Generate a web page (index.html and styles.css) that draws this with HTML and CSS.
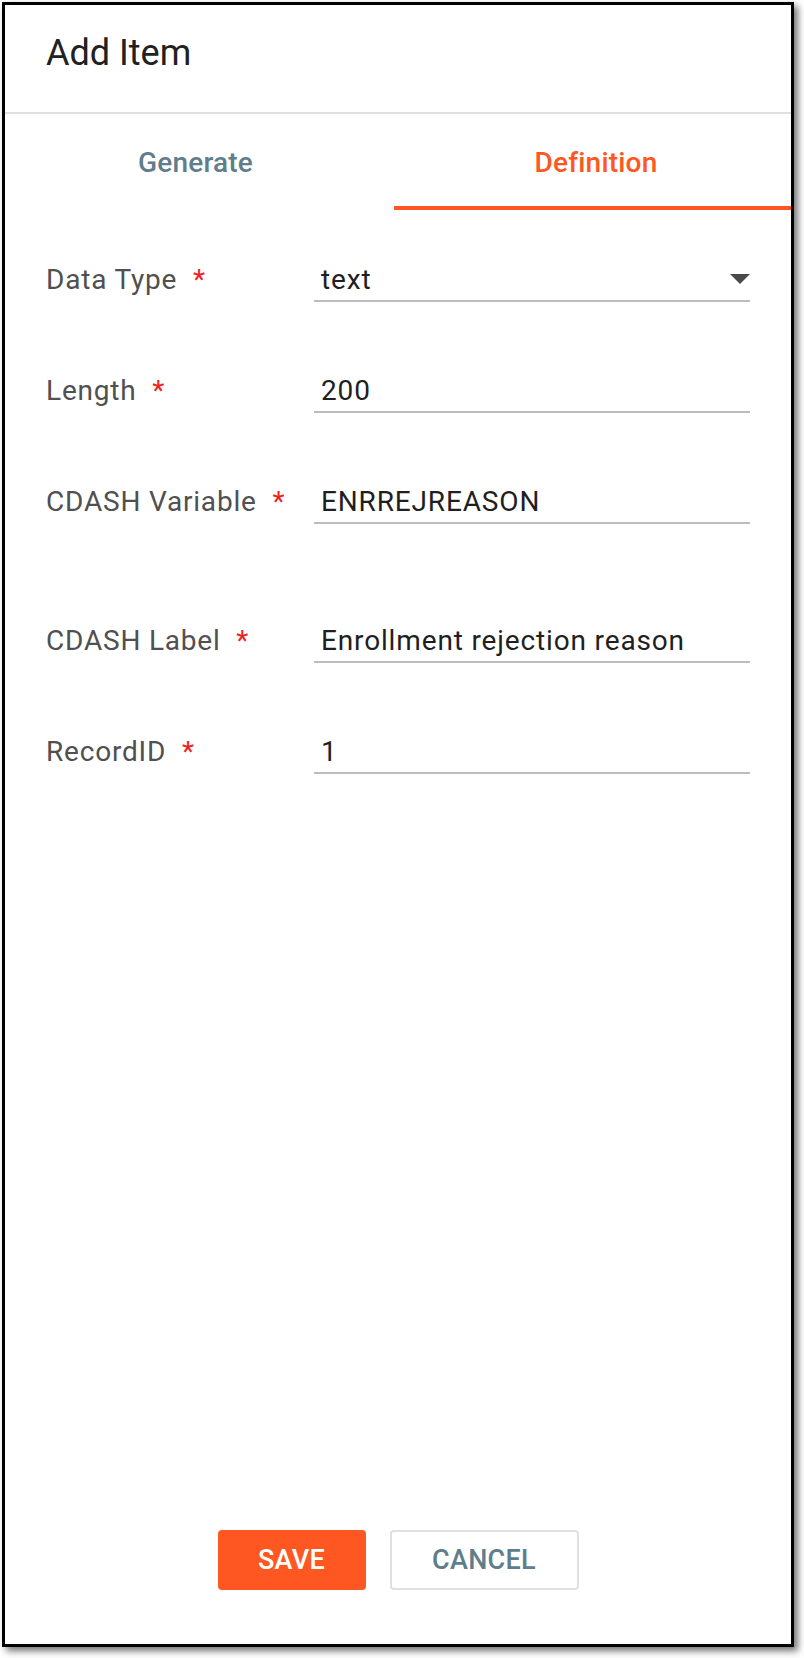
FILE: index.html
```html
<!DOCTYPE html>
<html lang="en">
<head>
<meta charset="utf-8">
<title>Add Item</title>
<link rel="stylesheet" href="styles.css">
</head>
<body>
<div class="dialog">
  <div class="dialog-header">
    <h1 class="dialog-title">Add Item</h1>
  </div>
  <div class="tabs">
    <div class="tab tab-first">Generate</div>
    <div class="tab tab-active">Definition</div>
  </div>
  <div class="form">
    <div class="field-row">
      <div class="field-label">Data Type <span class="req">*</span></div>
      <div class="field-input select">
        <span class="value">text</span>
        <svg class="arrow" width="20" height="10" viewBox="0 0 20 10"><path d="M0 0 L20 0 L10 10 Z" fill="#4a4a4a"/></svg>
      </div>
    </div>
    <div class="field-row">
      <div class="field-label">Length <span class="req">*</span></div>
      <div class="field-input"><span class="value">200</span></div>
    </div>
    <div class="field-row field-row-spaced">
      <div class="field-label">CDASH Variable <span class="req">*</span></div>
      <div class="field-input"><span class="value">ENRREJREASON</span></div>
    </div>
    <div class="field-row">
      <div class="field-label">CDASH Label <span class="req">*</span></div>
      <div class="field-input"><span class="value">Enrollment rejection reason</span></div>
    </div>
    <div class="field-row">
      <div class="field-label">RecordID <span class="req">*</span></div>
      <div class="field-input"><span class="value">1</span></div>
    </div>
  </div>
  <div class="actions">
    <button class="btn btn-primary">SAVE</button>
    <button class="btn btn-secondary">CANCEL</button>
  </div>
</div>
</body>
</html>
```
FILE: styles.css
```css
html, body {
  margin: 0;
  padding: 0;
  background: #ffffff;
}

body {
  font-family: Roboto, "Liberation Sans", sans-serif;
  width: 804px;
  height: 1658px;
  overflow: hidden;
}

.dialog {
  margin: 2px 0 0 2px;
  width: 792px;
  height: 1645px;
  box-sizing: border-box;
  border: 3px solid #000000;
  background: #ffffff;
  box-shadow: 4px 4px 7px rgba(0, 0, 0, 0.55);
  display: flex;
  flex-direction: column;
}

.dialog-header {
  height: 109px;
  box-sizing: border-box;
  padding: 30px 0 0 41px;
  border-bottom: 2px solid #e0e0e0;
}

.dialog-title {
  margin: 0;
  font-size: 36px;
  line-height: 36px;
  font-weight: 400;
  color: #212121;
}

.tabs {
  display: flex;
  height: 96px;
}

.tab {
  display: flex;
  align-items: center;
  justify-content: center;
  font-size: 28px;
  font-weight: 500;
  letter-spacing: 0.2px;
  color: #607d8b;
  box-sizing: border-box;
}

.tab-first {
  width: 389px;
  padding-right: 8px;
}

.tab-active {
  flex: 1;
  color: #ff5722;
  border-bottom: 4px solid #ff5722;
  padding-top: 4px;
  padding-left: 7px;
}

.form {
  flex: 1;
  padding: 52px 41px 0 41px;
  display: flex;
  flex-direction: column;
  gap: 71px;
}

.field-row {
  display: flex;
  align-items: flex-start;
}

.field-row-spaced {
  margin-bottom: 28px;
}

.field-label {
  width: 268px;
  flex: none;
  font-size: 28px;
  line-height: 36px;
  letter-spacing: 0.8px;
  color: #505050;
}

.req {
  color: #ee2222;
  margin-left: 8px;
}

.field-input {
  flex: 1;
  display: flex;
  align-items: center;
  padding: 0 0 2px 7px;
  border-bottom: 2px solid #bdbdbd;
  font-size: 28px;
  line-height: 36px;
  letter-spacing: 0.85px;
  color: #1f1f1f;
}

.field-input .value {
  flex: 1;
}

.select .arrow {
  flex: none;
  margin-bottom: 2px;
}

.actions {
  display: flex;
  justify-content: center;
  gap: 24px;
  padding-bottom: 54px;
}

.btn {
  height: 60px;
  box-sizing: border-box;
  border-radius: 4px;
  font-family: Roboto, "Liberation Sans", sans-serif;
  font-size: 27px;
  font-weight: 500;
  letter-spacing: 0.3px;
  padding: 0 30px;
  cursor: pointer;
}

.btn-primary {
  background: #ff5722;
  color: #ffffff;
  border: none;
  width: 148px;
}

.btn-secondary {
  background: #ffffff;
  color: #607d8b;
  border: 2px solid #e0e0e0;
  width: 189px;
}
```
